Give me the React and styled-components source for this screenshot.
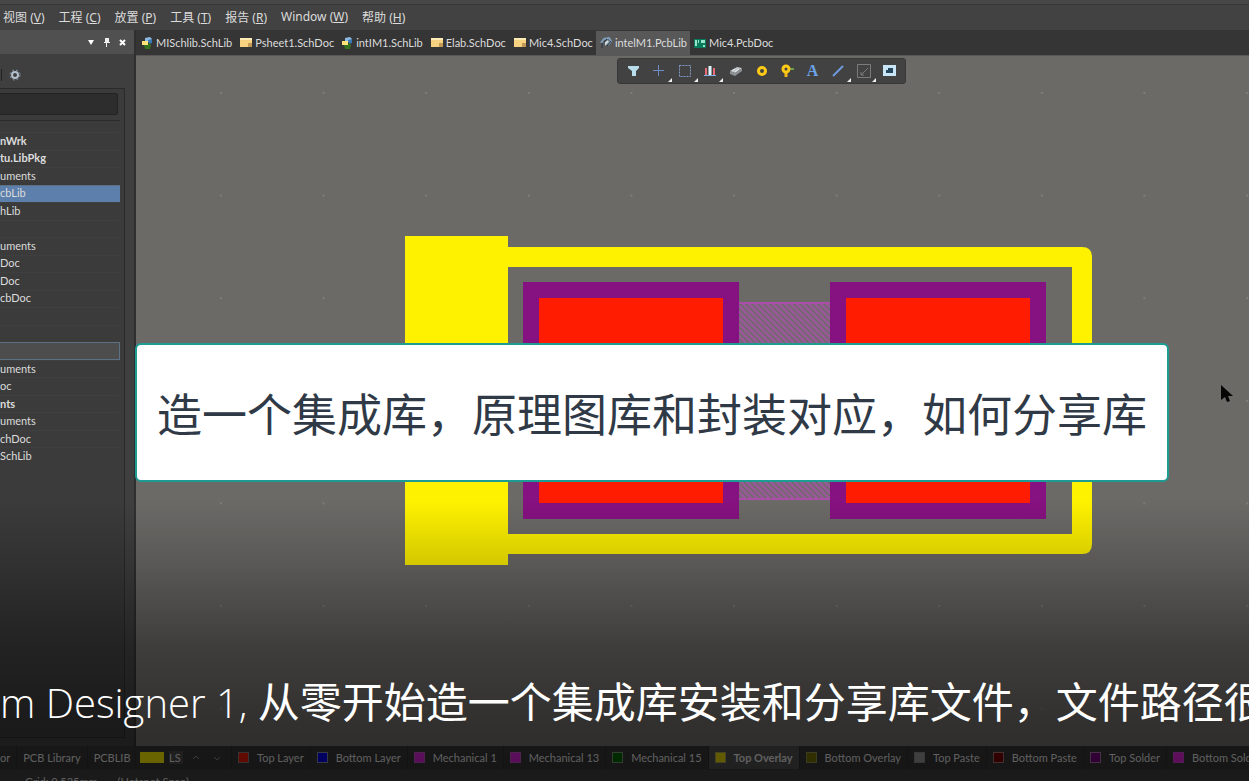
import React from "react";
import styled, { createGlobalStyle } from "styled-components";

const GlobalStyle = createGlobalStyle`
  * {
    box-sizing: border-box;
  }

  body {
    margin: 0;
    background: #3c3c3c;
    color: #dcdcdc;
    font-family: Lato, "Noto Sans", "Noto Sans CJK SC", sans-serif;
    font-size: 11px;
  }

  button {
    border: 0;
    padding: 0;
    background: none;
    color: inherit;
    font: inherit;
    white-space: nowrap;
  }
`;

const Page = styled.div`
  position: relative;
  display: flex;
  flex-direction: column;
  height: 100vh;
  overflow: hidden;
`;

const TitleStrip = styled.div`
  flex: none;
  height: 5px;
  background: #474747;
  border-bottom: 1px solid #363636;
`;

const MenuBar = styled.nav`
  display: flex;
  flex: none;
  align-items: center;
  gap: 14px;
  height: 25px;
  padding: 0 0 2px 3px;
  background: #424242;
  font-family: "Noto Sans", "Noto Sans CJK SC", sans-serif;
  font-size: 12px;
`;

const Body = styled.div`
  display: flex;
  flex: 1;
  min-height: 0;
`;

const Sidebar = styled.aside`
  display: flex;
  flex: none;
  flex-direction: column;
  width: 136px;
  background: #3f3f3f;
  border-right: 2px solid #303030;
`;

const PanelHeader = styled.div`
  display: flex;
  flex: none;
  align-items: center;
  justify-content: flex-end;
  gap: 7px;
  height: 24px;
  padding-right: 7px;
  background: #505050;

  button {
    display: flex;
  }
`;

const PanelTools = styled.div`
  display: flex;
  flex: none;
  align-items: center;
  height: 34px;
  padding: 8px 0 0 1px;

  button {
    display: flex;
    padding-left: 7px;
    border-left: 1px solid #222;
  }
`;

const PanelBody = styled.div`
  flex: 1;
  min-height: 0;
  margin: 0 9px 8px 0;
  padding-right: 4px;
  background: #3b3b3b;
  border: 1px solid #2a2a2a;
  border-left: 0;
`;

const Search = styled.input`
  display: block;
  width: 100%;
  max-width: 118px;
  height: 22px;
  margin-top: 4px;
  background: #2d2d2d;
  border: 1px solid #232323;
  border-left: 0;
  border-radius: 0 3px 3px 0;
  color: #dcdcdc;
`;

const Tree = styled.ul`
  display: grid;
  grid-auto-rows: 1fr;
  height: 345px;
  margin: 5px 0 0;
  padding: 11px 0 0;
  border-top: 1px solid #2c2c2c;
  list-style: none;
`;

const TreeRow = styled.li`
  display: flex;
  align-items: center;
  overflow: hidden;
  background: ${({ $state }) =>
    $state === "selected" ? "#5d7fab" : $state === "focused" ? "#4d4d4d" : "none"};
  border: 1px solid ${({ $state }) => ($state === "focused" ? "#5d7184" : "transparent")};
  border-top-color: ${({ $state }) => ($state ? "#5d7184" : "#3f3f3f")};
  border-left: 0;
  font-weight: ${({ $bold }) => ($bold ? 700 : 400)};
  line-height: 14px;
`;

const PanelTabs = styled.div`
  display: flex;
  flex: none;
  height: 23px;
  background: #343434;
  overflow: hidden;

  button {
    padding-right: 6px;
    border-right: 1px solid #2c2c2c;
  }

  button + button {
    padding-left: 6px;
  }
`;

const Workspace = styled.main`
  display: flex;
  flex: 1;
  flex-direction: column;
  min-width: 0;
`;

const DocTabs = styled.div`
  display: flex;
  flex: none;
  height: 26px;
  padding: 1px 0 0 1px;
  background: #353535;
  border-bottom: 1px solid #585755;
`;

const DocTab = styled.button`
  display: flex;
  align-items: center;
  gap: 3px;
  padding: 0 3px 1px 4px;
  background: ${({ $active }) => ($active ? "#585858" : "none")};

  svg {
    flex: none;
  }
`;

const Canvas = styled.section`
  position: relative;
  flex: 1;
  min-height: 0;
  background: #6c6a67;
`;

const Drawing = styled.svg`
  display: block;
  width: 100%;
  height: 100%;
`;

const ToolBar = styled.div`
  position: absolute;
  top: 2px;
  left: 481px;
  display: flex;
  width: 289px;
  height: 26px;
  padding: 0 3px;
  background: #424242;
  border: 1px solid #383838;
  border-radius: 3px;
`;

const Tool = styled.button`
  position: relative;
  display: flex;
  flex: 1;
  align-items: center;
  justify-content: center;

  &::after {
    content: "";
    position: absolute;
    right: 0;
    bottom: 1px;
    display: ${({ $menu }) => ($menu ? "block" : "none")};
    border: 2px solid transparent;
    border-right-color: #eee;
    border-bottom-color: #eee;
  }
`;

const LayerBar = styled.div`
  display: flex;
  flex: none;
  height: 23px;
  background: #343434;
  overflow: hidden;
`;

const LayerSet = styled.div`
  display: flex;
  flex: none;
  align-items: center;
  gap: 5px;
  width: 96px;
  padding-left: 4px;
  border-right: 1px solid #2c2c2c;

  span {
    padding-right: 2px;
    background: #484848;
    line-height: 13px;
  }

  button {
    display: flex;
    padding: 0 4px;
  }
`;

const Layer = styled.button`
  display: flex;
  flex: none;
  align-items: center;
  gap: 8px;
  padding: 0 6px;
  background: ${({ $active }) => ($active ? "#4c4c4c" : "none")};
  border-right: 1px solid #2c2c2c;
  font-weight: ${({ $active }) => ($active ? 700 : 400)};
`;

const Swatch = styled.i`
  width: ${({ $wide }) => ($wide ? "24px" : "11px")};
  height: 11px;
  background: ${({ $color }) => $color};
  border: 1px solid ${({ $edge, $color }) => $edge || $color};
`;

const StatusBar = styled.footer`
  display: flex;
  flex: none;
  gap: 20px;
  height: 12px;
  padding: 4px 0 0 25px;
  background: #3e3e3e;
  border-top: 1px solid #363636;
  line-height: 16px;
  overflow: hidden;
`;

const Shade = styled.div`
  position: absolute;
  inset: auto 0 0;
  height: 281px;
  background: linear-gradient(
    rgba(0, 0, 0, 0) 0%,
    rgba(0, 0, 0, 0.18) 24%,
    rgba(0, 0, 0, 0.42) 52%,
    rgba(0, 0, 0, 0.55) 80%,
    rgba(0, 0, 0, 0.58) 100%
  );
  pointer-events: none;
`;

const Banner = styled.h1`
  position: absolute;
  top: 343px;
  left: 135px;
  right: 80px;
  margin: 0;
  padding: 38px 0 33px;
  background: #fff;
  border: 2px solid #1d9c94;
  border-radius: 6px;
  color: #303a47;
  font-size: 45px;
  font-weight: 400;
  line-height: 64px;
  text-align: center;
  white-space: nowrap;
`;

const Caption = styled.p`
  position: absolute;
  inset: auto 0 46px;
  margin: 0;
  color: #fff;
  font-size: 42px;
  line-height: 64px;
  white-space: nowrap;
  overflow: hidden;
`;

const Latin = styled.span`
  font-family: "Open Sans", "Noto Sans", sans-serif;
  font-size: 40px;
  font-weight: 300;
`;

const Pointer = styled.svg`
  position: absolute;
  top: 384px;
  right: 15px;
`;

const menus = [
  ["视图", "V"],
  ["工程", "C"],
  ["放置", "P"],
  ["工具", "T"],
  ["报告", "R"],
  ["Window", "W"],
  ["帮助", "H"],
];

const documents = [
  { name: "MISchlib.SchLib", kind: "schlib" },
  { name: "Psheet1.SchDoc", kind: "schdoc" },
  { name: "intIM1.SchLib", kind: "schlib" },
  { name: "Elab.SchDoc", kind: "schdoc" },
  { name: "Mic4.SchDoc", kind: "schdoc" },
  { name: "intelM1.PcbLib", kind: "pcblib", active: true },
  { name: "Mic4.PcbDoc", kind: "pcbdoc" },
];

const tree = [
  { text: "nWrk", bold: true },
  { text: "tu.LibPkg", bold: true },
  { text: "uments" },
  { text: "cbLib", state: "selected" },
  { text: "hLib" },
  { text: "" },
  { text: "uments" },
  { text: "Doc" },
  { text: "Doc" },
  { text: "cbDoc" },
  { text: "" },
  { text: "" },
  { text: "", state: "focused" },
  { text: "uments" },
  { text: "oc" },
  { text: "nts", bold: true },
  { text: "uments" },
  { text: "chDoc" },
  { text: "SchLib" },
];

const layers = [
  { name: "Top Layer", color: "#e01800", edge: "#8a7070" },
  { name: "Bottom Layer", color: "#0000e0", edge: "#8080a0" },
  { name: "Mechanical 1", color: "#d020d0", edge: "#b050b0" },
  { name: "Mechanical 13", color: "#d020d0", edge: "#b050b0" },
  { name: "Mechanical 15", color: "#006000", edge: "#709070" },
  { name: "Top Overlay", color: "#e0d000", edge: "#a09a50", active: true },
  { name: "Bottom Overlay", color: "#706c00", edge: "#8a8850" },
  { name: "Top Paste", color: "#909090", edge: "#808080" },
  { name: "Bottom Paste", color: "#700000", edge: "#a07070" },
  { name: "Top Solder", color: "#700078", edge: "#a070a0" },
  { name: "Bottom Solder", color: "#d820d0", edge: "#c040c0" },
];

function DocIcon({ kind }) {
  if (kind === "schdoc") {
    return (
      <svg width="13" height="11" viewBox="0 0 13 11">
        <path d="M1 1h12v9H1z" fill="#f6d281" />
        <path d="M1 1h12v2H1z" fill="#ffebb5" />
        <path d="M9 6h4v4H9z" fill="#c39a55" />
      </svg>
    );
  }
  if (kind === "schlib") {
    return (
      <svg width="12" height="12" viewBox="0 0 12 12">
        <path d="M4 1l5-1 2 2v3H4z" fill="#8dbbe3" />
        <path d="M7 3l4-1v4L8 7z" fill="#3978b5" />
        <path d="M3 8l5-2 2 2-1 4H4z" fill="#36731f" />
        <path d="M1 4h6v4H1z" fill="#ffe27a" />
      </svg>
    );
  }
  if (kind === "pcblib") {
    return (
      <svg width="12" height="12" viewBox="0 0 12 12">
        <path d="M1 6l3-4 5-1 2 3-3 4" fill="none" stroke="#7f9db8" strokeWidth="2" />
        <path d="M2 6v5M4 5l3-3M7 9l4-5" stroke="#26323d" />
        <path d="M5 5l3-2 1 2-4 4z" fill="#c8d6e2" />
      </svg>
    );
  }
  return (
    <svg width="12" height="10" viewBox="0 0 12 10">
      <path d="M0 1h12v9H0z" fill="#087b5b" />
      <path d="M1 2h2v6H1zM4 2h1v3H4zM7 2h4v3H7zM9 7h2v2H9z" fill="#9be4cc" />
    </svg>
  );
}

const tools = [
  {
    label: "Filter",
    art: <path d="M2 3h11v2l-3 3v5H6V8L2 5z" fill="#b9dced" />,
  },
  {
    label: "Snap",
    menu: true,
    art: <path d="M7.5 2v11M2 7.5h11" stroke="#6f8bc4" />,
  },
  {
    label: "Select",
    menu: true,
    art: <path d="M2.5 2.5h11v11h-11z" fill="none" stroke="#829ac8" strokeDasharray="2 1" />,
  },
  {
    label: "Align",
    menu: true,
    art: (
      <>
        <path d="M4 5v7M12 5v7" stroke="#e76a75" strokeWidth="2" />
        <path d="M8 3v9" stroke="#e1f5ff" strokeWidth="3" />
        <path d="M2 12.5h12" stroke="#80b5e7" />
      </>
    ),
  },
  {
    label: "Component",
    art: (
      <>
        <path d="M2 8l7-4 5 1-7 5z" fill="#c1c5c9" />
        <path d="M2 8l5 2v3l-5-2zM7 10l7-5v3l-7 5z" fill="#8c9196" />
        <path d="M4 8l3-2M7 9l4-3" stroke="#edf0f2" />
      </>
    ),
  },
  {
    label: "Pad",
    art: <circle cx="8" cy="8" r="3.5" fill="none" stroke="#ffcb16" strokeWidth="3" />,
  },
  {
    label: "Via",
    art: (
      <>
        <path d="M10 6h5" stroke="#709b46" strokeWidth="2" />
        <path d="M7 8v6" stroke="#f5b811" strokeWidth="3" />
        <circle cx="7" cy="6" r="3" fill="none" stroke="#ffcb16" strokeWidth="3" />
      </>
    ),
  },
  { label: "String", letter: "A" },
  {
    label: "Line",
    menu: true,
    art: <path d="M3 13L13 3" stroke="#6f9bdc" strokeWidth="2" />,
  },
  {
    label: "Dimension",
    menu: true,
    art: <path d="M1.5 1.5h13v13h-13zM5 12l7-7M5 9v3h3" fill="none" stroke="#7b7b7b" />,
  },
  {
    label: "Polygon",
    art: (
      <>
        <path d="M2 2h13v11H2z" fill="#c8e5f5" />
        <path d="M5 10V7h2V5h5v5z" fill="#25465f" />
      </>
    ),
  },
];

const Letter = styled.b`
  color: #6da4e8;
  font-family: "Liberation Serif", serif;
  font-size: 16px;
`;

function Footprint() {
  return (
    <Drawing role="img" aria-label="intelM1">
      <defs>
        <pattern id="hatch" width="6" height="6" patternUnits="userSpaceOnUse">
          <path d="M-1 -1l8 8M-1 5l2 2M5 -1l2 2" stroke="#985a97" strokeWidth="3" />
        </pattern>
        <pattern id="dots" x="84" y="36" width="102.6" height="102.6" patternUnits="userSpaceOnUse">
          <path d="M0 0h2v2H0z" fill="#7f7d7a" />
        </pattern>
      </defs>
      <rect width="100%" height="100%" fill="url(#dots)" />
      <g transform="translate(269 180)">
        <path d="M0 0h103v329H0z" fill="#fff200" />
        <path
          d="M103 11h574q10 0 10 10v287q0 10-10 10H103v-20h564V31H103z"
          fill="#fff200"
        />
        <path d="M334 66h91v198h-91z" fill="url(#hatch)" />
        <path d="M334 67h91M334 263h91" stroke="#ab4eaa" strokeWidth="2" />
        <path d="M118 46h216v237H118zM425 46h216v237H425z" fill="#861180" />
        <path d="M134 62h184v205H134zM441 62h184v205H441z" fill="#ff1c00" />
      </g>
    </Drawing>
  );
}

function ProjectPanel() {
  return (
    <Sidebar>
      <PanelHeader>
        <button aria-label="Panel menu">
          <svg width="9" height="10" viewBox="0 0 9 10">
            <path d="M2 3h6L5 8z" fill="#fff" />
          </svg>
        </button>
        <button aria-label="Pin">
          <svg width="9" height="10" viewBox="0 0 9 10">
            <path d="M3 1h4v4H3zM2 5h6v1H2zM4 6h1v4H4z" fill="#eee" />
          </svg>
        </button>
        <button aria-label="Close">
          <svg width="9" height="10" viewBox="0 0 9 10">
            <path d="M2 3l5 5M7 3L2 8" stroke="#fff" strokeWidth="2" />
          </svg>
        </button>
      </PanelHeader>
      <PanelTools>
        <button aria-label="Settings">
          <svg width="12" height="12" viewBox="0 0 12 12">
            <circle cx="6" cy="6" r="5" fill="none" stroke="#8999a8" strokeDasharray="2 2" />
            <circle cx="6" cy="6" r="3" fill="none" stroke="#b4c2cf" strokeWidth="2" />
          </svg>
        </button>
      </PanelTools>
      <PanelBody>
        <Search aria-label="Search" />
        <Tree>
          {tree.map((row, i) => (
            <TreeRow key={i} $bold={row.bold} $state={row.state}>
              {row.text}
            </TreeRow>
          ))}
        </Tree>
      </PanelBody>
      <PanelTabs>
        <button>or</button>
        <button>PCB Library</button>
        <button>PCBLIB</button>
      </PanelTabs>
    </Sidebar>
  );
}

function App() {
  return (
    <Page>
      <GlobalStyle />
      <TitleStrip />
      <MenuBar>
        {menus.map(([name, key]) => (
          <button key={key}>
            {name} (<u>{key}</u>)
          </button>
        ))}
      </MenuBar>
      <Body>
        <ProjectPanel />
        <Workspace>
          <DocTabs>
            {documents.map((doc) => (
              <DocTab key={doc.name} $active={doc.active}>
                <DocIcon kind={doc.kind} />
                {doc.name}
              </DocTab>
            ))}
          </DocTabs>
          <Canvas>
            <Footprint />
            <ToolBar>
              {tools.map((tool) => (
                <Tool key={tool.label} aria-label={tool.label} $menu={tool.menu}>
                  {tool.letter ? (
                    <Letter>{tool.letter}</Letter>
                  ) : (
                    <svg width="16" height="16" viewBox="0 0 16 16">
                      {tool.art}
                    </svg>
                  )}
                </Tool>
              ))}
            </ToolBar>
          </Canvas>
          <LayerBar>
            <LayerSet>
              <Swatch $wide $color="#f2e600" />
              <span>LS</span>
              <button aria-label="Previous">
                <svg width="8" height="8" viewBox="0 0 8 8">
                  <path d="M1 5l3-3 3 3" fill="none" stroke="#888" />
                </svg>
              </button>
              <button aria-label="Next">
                <svg width="8" height="8" viewBox="0 0 8 8">
                  <path d="M1 3l3 3 3-3" fill="none" stroke="#888" />
                </svg>
              </button>
            </LayerSet>
            {layers.map((layer) => (
              <Layer key={layer.name} $active={layer.active}>
                <Swatch $color={layer.color} $edge={layer.edge} />
                {layer.name}
              </Layer>
            ))}
          </LayerBar>
        </Workspace>
      </Body>
      <StatusBar>
        <span>Grid: 0.525mm</span>
        <span>(Hotspot Snap)</span>
      </StatusBar>
      <Shade />
      <Banner>造一个集成库，原理图库和封装对应，如何分享库</Banner>
      <Caption>
        <Latin>m Designer 1, </Latin>
        从零开始造一个集成库安装和分享库文件，文件路径很
      </Caption>
      <Pointer width="14" height="20" viewBox="0 0 14 20">
        <path d="M1 1v15l4-3 2 5 3-1-2-5h5z" fill="#050505" />
      </Pointer>
    </Page>
  );
}

export default App;
